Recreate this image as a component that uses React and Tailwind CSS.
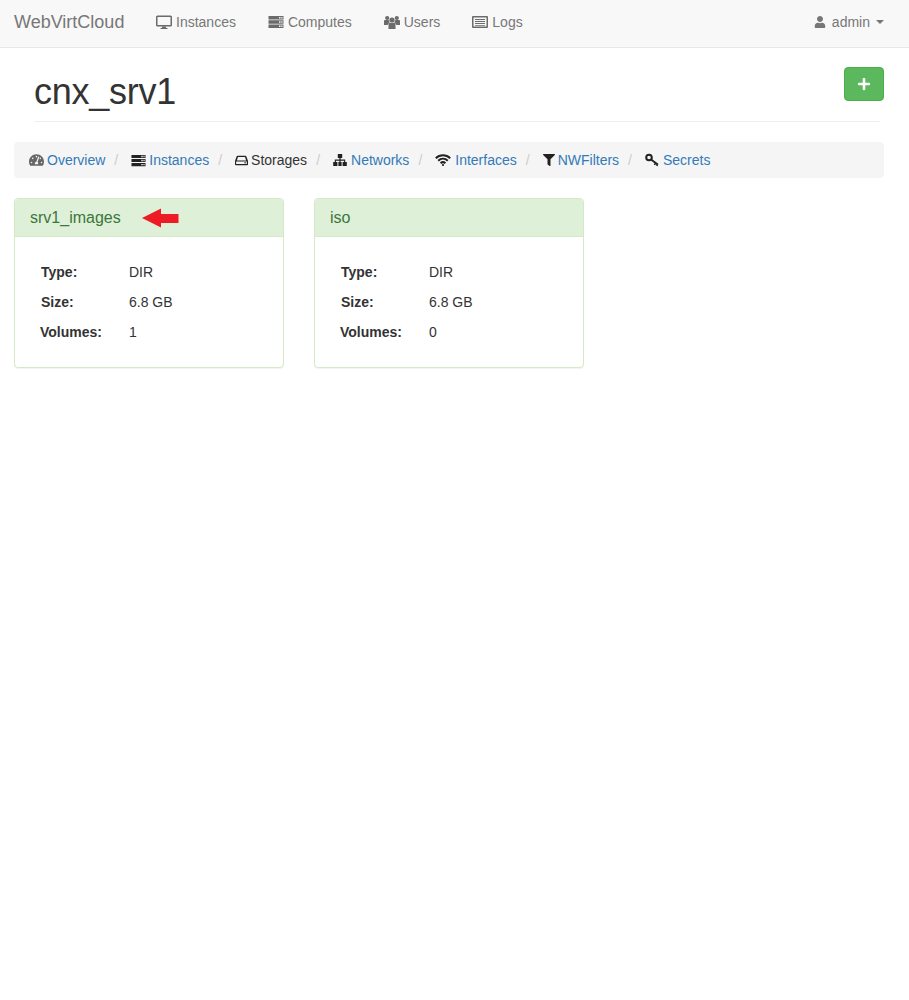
import React from "react";
import { FaUser, FaTachometerAlt, FaFilter, FaPlus } from "react-icons/fa";

function Desktop({ className }) {
  return (
    <svg viewBox="0 0 16 16" className={className} fill="currentColor">
      <path d="M1.5 1.5h13A1.5 1.5 0 0 1 16 3v8a1.5 1.5 0 0 1-1.5 1.5h-13A1.5 1.5 0 0 1 0 11V3a1.5 1.5 0 0 1 1.5-1.5zM1.5 3v8h13V3z" fillRule="evenodd" />
      <path d="M6 12.5h4v1.5h1.5v1h-7v-1H6z" />
    </svg>
  );
}

function Stripes({ className }) {
  return (
    <svg viewBox="0 0 16 16" className={className} fill="currentColor">
      <path fillRule="evenodd" d="M0.5 2h15v3.4h-15zM11 3v1.4h1.5V3zM13.3 3v1.4h1.2V3zM0.5 6.3h15v3.4h-15zM11 7.3v1.4h1.5V7.3zM13.3 7.3v1.4h1.2V7.3zM0.5 10.6h15V14h-15zM11 11.6V13h1.5v-1.4zM13.3 11.6V13h1.2v-1.4z" />
    </svg>
  );
}

function Users({ className }) {
  return (
    <svg viewBox="0 0 16 16" className={className} fill="currentColor">
      <circle cx="3.2" cy="4" r="2.1" />
      <circle cx="12.8" cy="4" r="2.1" />
      <path d="M0 6.8q0-.8 1-.8h3.6q.8 1.6 1 2.8Q3.9 9.6 3.6 11H0zM16 6.8q0-.8-1-.8h-3.6q-.8 1.6-1 2.8 1.7.8 2 2.2H16z" />
      <circle cx="8" cy="6" r="2.6" />
      <path d="M4.5 10q0-1 1.2-1h4.6q1.2 0 1.2 1v5h-7z" />
    </svg>
  );
}

function ListAlt({ className }) {
  return (
    <svg viewBox="0 0 16 16" className={className} fill="currentColor">
      <path fillRule="evenodd" d="M1 2h14a1 1 0 0 1 1 1v10a1 1 0 0 1-1 1H1a1 1 0 0 1-1-1V3a1 1 0 0 1 1-1zM1.5 3.5v9h13v-9z" />
      <path d="M3 5h10v1H3zM3 7h10v1H3zM3 9h10v1H3zM3 11h10v.8H3z" />
    </svg>
  );
}

function Hdd({ className }) {
  return (
    <svg viewBox="0 0 14 14" className={className} fill="currentColor">
      <path fillRule="evenodd" d="M3 2h8q1 0 1.4 1l1.6 4.6V11a1 1 0 0 1-1 1H1a1 1 0 0 1-1-1V7.6L1.6 3Q2 2 3 2zM3.2 3.2 2 7h10l-1.2-3.8zM1.2 8.2v2.6h11.6V8.2z" />
      <path d="M10 9h2v1h-2z" />
    </svg>
  );
}

function Sitemap({ className }) {
  return (
    <svg viewBox="0 0 14 14" className={className} fill="currentColor">
      <path d="M4.8 1h4.4v4H7.6v1.6H12.2V9h1.6v4H9.6V9h1.5V7.7H7.6V9h1v4H5.4V9h1V7.7H2.9V9h1.5v4H.2V9h1.6V6.6h4.6V5H4.8z" />
    </svg>
  );
}

function Wifi({ className }) {
  return (
    <svg viewBox="0 0 16 14" className={className} fill="none" stroke="currentColor" strokeWidth="2">
      <path d="M.8 5.2C4.8 1.4 11.2 1.4 15.2 5.2" />
      <path d="M3.2 7.8C6 5.2 10 5.2 12.8 7.8" />
      <path d="M5.6 10.2C7 8.9 9 8.9 10.4 10.2" />
      <circle cx="8" cy="12" r="1.1" fill="currentColor" stroke="none" />
    </svg>
  );
}

function Key({ className }) {
  return (
    <svg viewBox="0 0 14 14" className={className} fill="none" stroke="currentColor">
      <circle cx="4" cy="4.5" r="2.8" strokeWidth="2" />
      <path d="M6 6.5 12.8 11.5" strokeWidth="2" />
      <path d="M10.5 10 9.5 12M12.6 11.2 11.8 13" strokeWidth="1.6" />
    </svg>
  );
}

const navItems = [
  { icon: Desktop, label: "Instances" },
  { icon: Stripes, label: "Computes" },
  { icon: Users, label: "Users" },
  { icon: ListAlt, label: "Logs" },
];

const crumbs = [
  { icon: FaTachometerAlt, label: "Overview", box: "w-[18px]", size: "h-4 w-[15px] text-[#666]" },
  { icon: Stripes, label: "Instances", box: "w-[18px]", size: "h-[15px] w-[15px] text-[#222]" },
  { icon: Hdd, label: "Storages", box: "w-[16px]", size: "h-[13px] w-[13px] text-[#222]", active: true },
  { icon: Sitemap, label: "Networks", box: "w-[18px]", size: "h-[14px] w-[14px] text-[#222]" },
  { icon: Wifi, label: "Interfaces", box: "w-[20px]", size: "h-[14px] w-4 text-[#222]" },
  { icon: FaFilter, label: "NWFilters", box: "w-[15px]", size: "h-3 w-3 text-[#222]" },
  { icon: Key, label: "Secrets", box: "w-[18px]", size: "h-[14px] w-[14px] text-[#222]" },
];

function Row({ label, value, labelPad }) {
  return (
    <div className="flex h-[30px] items-center">
      <div className={`w-[89px] font-bold ${labelPad}`}>{label}</div>
      <div>{value}</div>
    </div>
  );
}

function Panel({ name, type, size, volumes, arrow }) {
  return (
    <div className="h-[170px] w-[270px] overflow-hidden rounded border border-[#d6e9c6] bg-white shadow-[0_1px_1px_rgba(0,0,0,0.05)]">
      <div className="flex h-[38px] items-center border-b border-[#d6e9c6] bg-[#dff0d8] pl-[15px] text-base text-[#3c763d]">
        <span>{name}</span>
        {arrow && (
          <svg width="37" height="20" viewBox="0 0 37 20" className="ml-[21px]">
            <path d="M0 10 L19 0.5 V6 H36.5 V15 H19 V19.5 Z" fill="#ed1c24" />
          </svg>
        )}
      </div>
      <div className="px-[25px] pt-5">
        <Row label="Type:" value={type} labelPad="pl-px" />
        <Row label="Size:" value={size} labelPad="pl-px" />
        <Row label="Volumes:" value={volumes} labelPad="pl-0" />
      </div>
    </div>
  );
}

export default function App() {
  return (
    <div className="min-h-[1000px] bg-white text-sm text-[#333] [font-family:'Liberation_Sans',Arial,sans-serif]">
      <nav className="flex h-12 items-center justify-between border-b border-[#e7e7e7] bg-[#f8f8f8] pb-[3px] pl-[14px] pr-[25px] text-[#777]">
        <div className="flex items-center">
          <span className="w-[142px] text-lg">WebVirtCloud</span>
          <div className="flex items-center gap-8">
            {navItems.map(({ icon: Icon, label }) => (
              <span key={label} className="flex items-center gap-1">
                <Icon className="h-4 w-4 text-[#6b6b6b]" />
                {label}
              </span>
            ))}
          </div>
        </div>
        <div className="flex items-center">
          <FaUser className="mr-[6px] h-3 w-3 text-[#777]" />
          <span>admin</span>
          <span className="ml-[6px] h-0 w-0 border-x-4 border-t-4 border-x-transparent border-t-[#777]" />
        </div>
      </nav>

      <div className="pl-[14px] pr-[25px]">
        <div className="relative">
          <div className="ml-5 mr-1 flex h-[74px] items-start border-b border-[#eee] pt-[24px]">
            <h1 className="text-4xl leading-[40px] font-medium tracking-[-0.25px] text-[#333]">cnx_srv1</h1>
          </div>
          <button className="absolute top-[19px] right-0 flex h-[34px] w-10 items-center justify-center rounded border border-[#4cae4c] bg-[#5cb85c] text-white">
            <FaPlus className="h-3.5 w-3.5" />
          </button>
        </div>

        <div className="mt-5 flex h-9 items-center rounded bg-[#f5f5f5] px-[15px]">
          {crumbs.map(({ icon: Icon, label, active, box, size }, i) => (
            <React.Fragment key={label}>
              {i > 0 && <span className="pl-[9px] pr-[13px] text-[#ccc]">/</span>}
              <span className={`flex items-center ${active ? "text-[#333]" : "text-[#337ab7]"}`}>
                <span className={`flex items-center ${box}`}>
                  <Icon className={size} />
                </span>
                {label}
              </span>
            </React.Fragment>
          ))}
        </div>

        <div className="mt-5 flex gap-[30px]">
          <Panel name="srv1_images" type="DIR" size="6.8 GB" volumes="1" arrow />
          <Panel name="iso" type="DIR" size="6.8 GB" volumes="0" />
        </div>
      </div>
    </div>
  );
}
